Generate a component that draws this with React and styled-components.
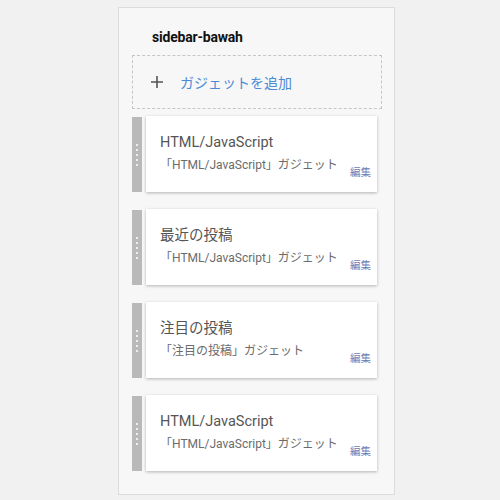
import React from "react";
import styled, { createGlobalStyle } from "styled-components";

const Global = createGlobalStyle`
  html, body { margin: 0; padding: 0; background: #f1f1f1; }
  body { font-family: Roboto, "Noto Sans CJK JP", sans-serif; }
`;

const Page = styled.div`
  width: 500px;
  height: 500px;
  box-sizing: border-box;
  padding: 7px 0 0 118px;
`;

const Panel = styled.section`
  width: 277px;
  height: 488px;
  box-sizing: border-box;
  border: 1px solid #dcdcdc;
  background: #f7f7f7;
  padding: 0 12px 0 13px;
  display: flex;
  flex-direction: column;
`;

const Title = styled.h2`
  margin: 0;
  padding: 20px 0 0 20px;
  height: 47px;
  box-sizing: border-box;
  font-size: 14px;
  line-height: 18px;
  font-weight: 700;
  color: #111;
  letter-spacing: -0.2px;
`;

const AddBox = styled.div`
  height: 54px;
  box-sizing: border-box;
  border: 1px dashed #c6c6c6;
  display: flex;
  align-items: center;
  padding-left: 18px;
  gap: 17px;
  color: #4a8ad6;
  font-size: 14px;
`;

const List = styled.div`
  display: flex;
  flex-direction: column;
  gap: 17px;
  margin-top: 7px;
`;

const Row = styled.div`
  display: flex;
  align-items: stretch;
  gap: 4px;
  margin-right: 5px;
`;

const Handle = styled.div`
  width: 10px;
  margin: 1px 0 0;
  background: #b9b9b9;
  display: flex;
  flex-direction: column;
  align-items: center;
  justify-content: center;
  gap: 3px;
`;

const Dot = styled.span`
  width: 2px;
  height: 2px;
  border-radius: 50%;
  background: #fff;
`;

const Card = styled.div`
  flex: 1;
  height: 76px;
  box-sizing: border-box;
  background: #fff;
  box-shadow: 0 1px 3px rgba(0, 0, 0, 0.28);
  position: relative;
  padding: 18px 0 0 14px;
`;

const CardTitle = styled.div`
  font-size: 14.5px;
  line-height: 18px;
  color: #555;
`;

const CardSub = styled.div`
  margin-top: 5px;
  font-size: 12px;
  line-height: 16px;
  color: #6b6b6b;
`;

const Edit = styled.a`
  position: absolute;
  right: 6px;
  bottom: 13px;
  font-size: 10.5px;
  line-height: 12px;
  color: #6c7cb4;
  text-decoration: none;
`;

const Plus = () => (
  <svg width="12" height="12" viewBox="0 0 12 12">
    <path d="M6 0v12M0 6h12" stroke="#555" strokeWidth="1.6" fill="none" />
  </svg>
);

const items = [
  { title: "HTML/JavaScript", sub: "「HTML/JavaScript」ガジェット" },
  { title: "最近の投稿", sub: "「HTML/JavaScript」ガジェット" },
  { title: "注目の投稿", sub: "「注目の投稿」ガジェット" },
  { title: "HTML/JavaScript", sub: "「HTML/JavaScript」ガジェット" },
];

export default function App() {
  return (
    <Page>
      <Global />
      <Panel>
        <Title>sidebar-bawah</Title>
        <AddBox>
          <Plus />
          <span>ガジェットを追加</span>
        </AddBox>
        <List>
          {items.map((it, i) => (
            <Row key={i}>
              <Handle>
                {[0, 1, 2, 3, 4].map((d) => (
                  <Dot key={d} />
                ))}
              </Handle>
              <Card>
                <CardTitle>{it.title}</CardTitle>
                <CardSub>{it.sub}</CardSub>
                <Edit href="#">編集</Edit>
              </Card>
            </Row>
          ))}
        </List>
      </Panel>
    </Page>
  );
}
